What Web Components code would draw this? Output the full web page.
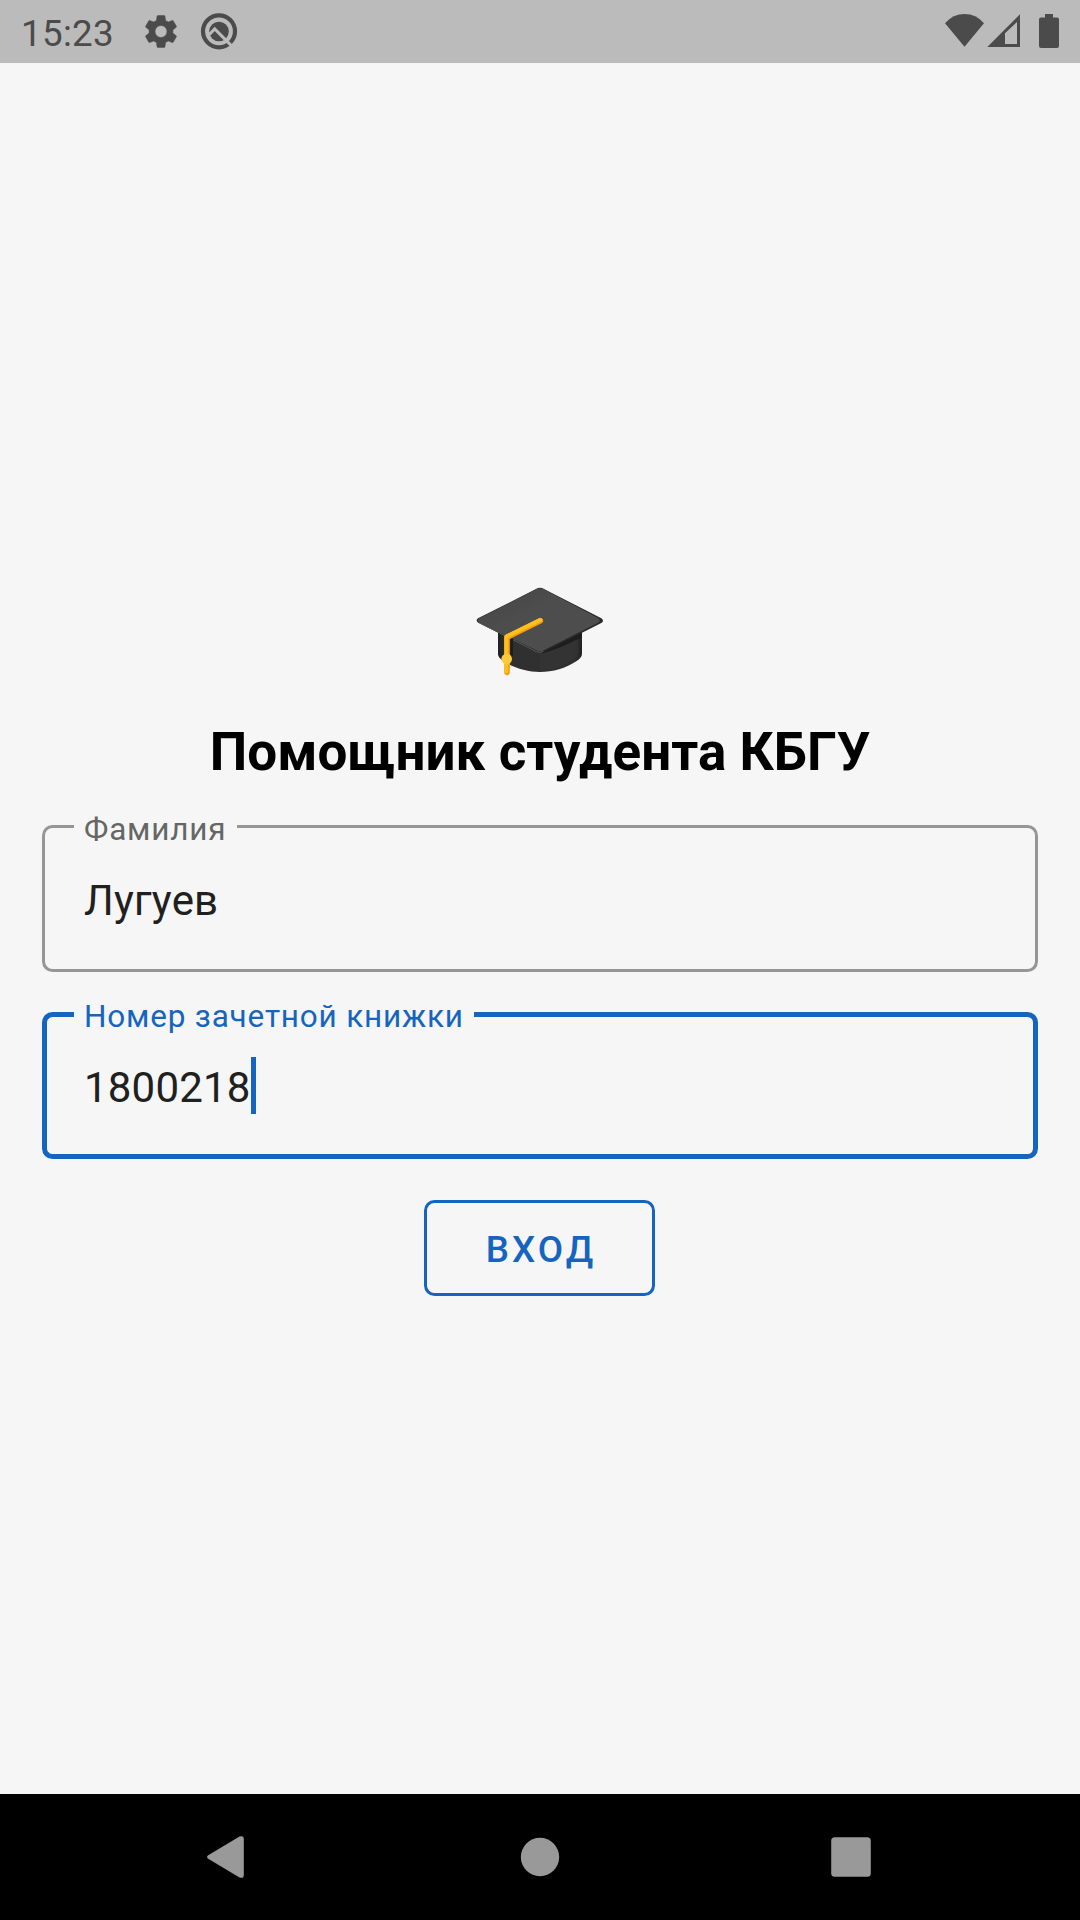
<!DOCTYPE html>
<html lang="ru">
<head>
<meta charset="utf-8">
<title>Помощник студента КБГУ</title>
<style>
html,body{margin:0;background:#f6f6f6}
body{font-family:Roboto,"Noto Sans",sans-serif}
</style>
</head>
<body>
<app-screen>
  <status-bar slot="top">15:23</status-bar>
  <grad-cap></grad-cap>
  <app-title>Помощник студента КБГУ</app-title>
  <text-field label="Фамилия">Лугуев</text-field>
  <text-field label="Номер зачетной книжки" focused>1800218</text-field>
  <outlined-button>ВХОД</outlined-button>
  <nav-bar slot="bottom"></nav-bar>
</app-screen>
<script>
function define(name, html) {
  const t = document.createElement('template');
  t.innerHTML = html;
  customElements.define(name, class extends HTMLElement {
    constructor() {
      super();
      this.attachShadow({mode: 'open'}).appendChild(t.content.cloneNode(true));
    }
    connectedCallback() {
      const label = this.shadowRoot.querySelector('.label');
      if (label) label.textContent = this.getAttribute('label');
    }
  });
}

define('app-screen', `<style>
:host{display:flex;flex-direction:column;width:1080px;height:1920px;background:#f6f6f6;overflow:hidden}
main{flex:1;display:flex;flex-direction:column;align-items:center;padding:525px 42px 0;box-sizing:border-box}
</style><slot name="top"></slot><main><slot></slot></main><slot name="bottom"></slot>`);

define('status-bar', `<style>
:host{display:flex;align-items:center;height:63px;flex:none;background:#bbb;color:#4b4b4b;font-size:36.75px;line-height:63px;box-sizing:border-box;padding:0 16px 0 21px}
.time{width:120px;padding-top:5px;line-height:58px;letter-spacing:.3px}
.gap{flex:1}
svg{display:block;fill:#4b4b4b}
</style>
<span class="time"><slot></slot></span>
<svg width="100" height="63" viewBox="141 0 100 63">
<g transform="translate(161 31.5) scale(1.66) translate(-12 -12)"><path stroke="#4b4b4b" stroke-width=".3" d="M19.14 12.94c.04-.3.06-.61.06-.94 0-.32-.02-.64-.07-.94l2.03-1.58c.18-.14.23-.41.12-.61l-1.92-3.32c-.12-.22-.37-.29-.59-.22l-2.39.96c-.5-.38-1.03-.7-1.62-.94l-.36-2.54c-.04-.24-.24-.41-.48-.41h-3.84c-.24 0-.43.17-.47.41l-.36 2.54c-.59.24-1.13.57-1.62.94l-2.39-.96c-.22-.08-.47 0-.59.22L2.74 8.87c-.12.21-.08.47.12.61l2.03 1.58c-.05.3-.09.63-.09.94s.02.64.07.94l-2.03 1.58c-.18.14-.23.41-.12.61l1.92 3.32c.12.22.37.29.59.22l2.39-.96c.5.38 1.03.7 1.62.94l.36 2.54c.05.24.24.41.48.41h3.84c.24 0 .44-.17.47-.41l.36-2.54c.59-.24 1.13-.56 1.62-.94l2.39.96c.22.08.47 0 .59-.22l1.92-3.32c.12-.22.07-.47-.12-.61l-2.01-1.58zM12 15.6A3.6 3.6 0 1 1 12 8.4a3.6 3.6 0 0 1 0 7.2z"/></g>
<circle cx="219" cy="31.3" r="16" fill="none" stroke="#4b4b4b" stroke-width="4.2"/>
<circle cx="219" cy="31.5" r="9.8"/>
<path d="M207.8 36L214.7 29L231.6 45.9" fill="none" stroke="#bbb" stroke-width="3"/>
</svg>
<span class="gap"></span>
<svg width="124" height="63" viewBox="940 0 124 63">
<path d="M945 23.2Q953 14 964.5 14T984 23.2L964.5 46.8Z"/>
<path fill-rule="evenodd" d="M987.3 47L1020 14.2V47ZM1005 33.3V44H1017V22Z"/>
<path d="M1045 14h8v3.4h4a2 2 0 0 1 2 2V46a2 2 0 0 1-2 2h-16a2 2 0 0 1-2-2V19.4a2 2 0 0 1 2-2h4Z"/>
</svg>`);

define('grad-cap', `<style>:host{display:block;width:160px;height:120px;margin-top:-18px}svg{display:block}</style>
<svg width="160" height="120" viewBox="0 0 480 360">
<defs><linearGradient id="a" x1="0" y1="0" x2="1" y2="1"><stop offset="0" stop-color="#444"/><stop offset=".4" stop-color="#4d4d4d"/><stop offset="1" stop-color="#4d4d4d"/></linearGradient>
<linearGradient id="b" x1="0" x2="1" y1="0" y2="0"><stop offset="0" stop-color="#202020"/><stop offset=".08" stop-color="#303030"/><stop offset=".9" stop-color="#303030"/><stop offset="1" stop-color="#222"/></linearGradient></defs>
<path d="M114 180H366V251C366 260 359 267 350 273C285 317 195 317 130 273C119 265 114 260 114 251Z" fill="url(#b)"/>
<path d="M240 249Q280 240 352 207Q356 211 356 217V250Q356 257 346 265Q300 299 240 301Z" fill="#353535" opacity=".7"/>
<path d="M240 249L366 185V201Q300 235 254 248Z" fill="#1d1d1d"/>
<path d="M54 145L228 57Q240 50 252 57L424 145Q434 152 424 159L253 245Q240 252 227 245L56 159Q45 152 54 145Z" fill="#292929"/>
<path d="M58 145L230 57Q240 52 250 57L414 144Q425 151 414 158L251 241Q240 247 229 241L58 157Q48 151 58 145Z" fill="url(#a)"/>
<path d="M56 157L229 245Q240 250 250 244" fill="none" stroke="#656565" stroke-width="2.5"/>
<path d="M155 206L155 257" stroke="#1d1d1d" stroke-width="8"/>
<path d="M241 152L141 202V307" fill="none" stroke="#f99a16" stroke-width="17" stroke-linecap="round" stroke-linejoin="round"/>
<path d="M240 150L139 200V304" fill="none" stroke="#ffc01e" stroke-width="12" stroke-linecap="round" stroke-linejoin="round"/>
<circle cx="140" cy="267" r="16" fill="#ffca3d"/>
</svg>`);

define('app-title', `<style>:host{display:block;height:62px;line-height:62px;margin-top:30px;padding-top:1px;box-sizing:border-box;font-size:53px;letter-spacing:.06px;font-weight:700;color:#000;white-space:nowrap}</style><slot></slot>`);

define('text-field', `<style>
:host{--c:#969696;--l:#666;--w:3px;display:grid;grid-template-columns:100%;width:996px;height:147px;margin-top:43px;flex:none}
:host([focused]){--c:#1565c0;--l:#1565c0;--w:5px;margin-top:40px}
.outline{grid-area:1/1;display:flex;min-width:0}
.start,.notch,.end{box-sizing:border-box;border:var(--w) solid var(--c)}
.start{width:32px;border-right:0;border-radius:10.5px 0 0 10.5px}
.notch{border-top:0;border-left:0;border-right:0;padding:0 10.5px 0 10px}
.end{flex:1;border-left:0;border-radius:0 10.5px 10.5px 0}
.label{display:block;margin-top:-14px;height:37px;line-height:37px;font-size:31.5px;letter-spacing:.81px;color:var(--l);white-space:nowrap}
.value{grid-area:1/1;display:flex;align-items:center;padding:45px 42px 0;height:57px;font-size:42px;letter-spacing:.2px;line-height:57px;color:#202020}
.text{padding-top:4px}
.caret{display:none;width:5px;height:57px;background:#1565c0}
:host([focused]) .caret{display:block}
</style>
<div class="outline"><div class="start"></div><div class="notch"><span class="label"></span></div><div class="end"></div></div>
<div class="value"><span class="text"><slot></slot></span><span class="caret"></span></div>`);

define('outlined-button', `<style>
:host{display:flex;align-items:center;justify-content:center;box-sizing:border-box;width:231px;height:96px;margin:41px 1px 0 0;padding:2px 0 0 3px;border:3px solid #1565c0;border-radius:10.5px;color:#1565c0;font-size:36.75px;font-weight:500;letter-spacing:3.1px;flex:none}
</style><slot></slot>`);

define('nav-bar', `<style>:host{display:block;height:126px;flex:none;background:#000}svg{display:block;fill:#999}</style>
<svg width="1080" height="126" viewBox="0 1794 1080 126">
<path d="M207.8 1855.4L239.5 1836.6Q243.7 1835 243.8 1839V1875Q243.7 1879 239.5 1877.4L207.8 1858.6Q206 1857 207.8 1855.4Z"/>
<circle cx="540" cy="1857" r="19.2"/>
<rect x="831.2" y="1837.2" width="39.6" height="39.6" rx="3.6"/>
</svg>`);
</script>
</body>
</html>
